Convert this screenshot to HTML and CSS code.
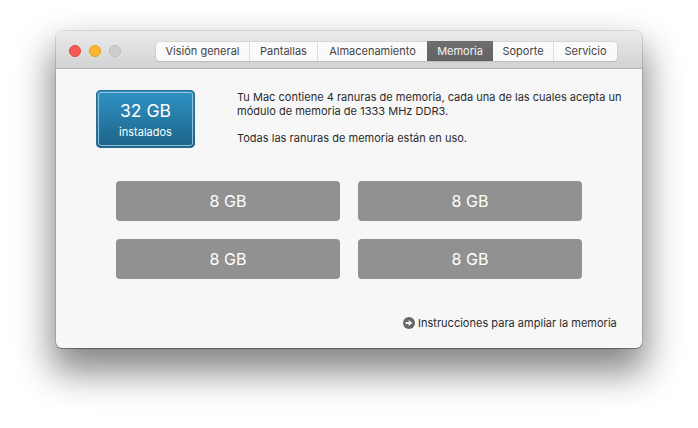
FILE: index.html
```html
<!DOCTYPE html>
<html lang="es">
<head>
<meta charset="utf-8">
<title>Memoria</title>
<link rel="stylesheet" href="styles.css">
</head>
<body>
<div class="window">
  <header class="titlebar">
    <div class="lights">
      <span class="light red"></span>
      <span class="light yellow"></span>
      <span class="light gray"></span>
    </div>
    <nav class="tabs">
      <span class="tab t1">Visión general</span>
      <span class="tab t2">Pantallas</span>
      <span class="tab t3">Almacenamiento</span>
      <span class="tab t4 active">Memoria</span>
      <span class="tab t5">Soporte</span>
      <span class="tab t6">Servicio</span>
    </nav>
  </header>
  <main class="content">
    <section class="summary">
      <div class="badge">
        <div class="badge-inner">
          <span class="badge-size">32 GB</span>
          <span class="badge-label">instalados</span>
        </div>
      </div>
      <div class="info">
        <p>Tu Mac contiene 4 ranuras de memoria, cada una de las cuales acepta un<br>módulo de memoria de 1333 MHz DDR3.</p>
        <p>Todas las ranuras de memoria están en uso.</p>
      </div>
    </section>
    <section class="slots">
      <div class="slot">8 GB</div>
      <div class="slot">8 GB</div>
      <div class="slot">8 GB</div>
      <div class="slot">8 GB</div>
    </section>
    <footer class="foot">
      <svg class="arrow" width="12" height="12" viewBox="0 0 12 12">
        <circle cx="6" cy="6" r="6" fill="#666"/>
        <path d="M2.6 5h3V2.9L9.5 6 5.6 9.1V7h-3z" fill="#f0f0f0"/>
      </svg>
      <span>Instrucciones para ampliar la memoria</span>
    </footer>
  </main>
</div>
</body>
</html>
```

FILE: styles.css
```css
html, body {
  margin: 0;
  padding: 0;
  width: 698px;
  height: 428px;
  overflow: hidden;
  background: #fff;
}
body {
  padding: 31px 56px 0;
  box-sizing: border-box;
  font-family: Inter, "Liberation Sans", sans-serif;
  color: #2b2b2b;
}
.window {
  width: 586px;
  height: 317px;
  border-radius: 6px;
  overflow: hidden;
  background: #f7f7f7;
  box-shadow: 0 0 0 0.5px rgba(0,0,0,.2), 0 1px 1px rgba(0,0,0,.3), 0 20px 36px 4px rgba(0,0,0,.48);
  display: flex;
  flex-direction: column;
}
.titlebar {
  height: 38px;
  box-sizing: border-box;
  flex: none;
  display: flex;
  align-items: flex-start;
  background: linear-gradient(#ebebeb, #d2d2d2);
  border-bottom: 1px solid #b4b4b4;
}
.lights {
  display: flex;
  gap: 8px;
  padding: 14px 0 0 13px;
  width: 87px;
  box-sizing: border-box;
  flex: none;
}
.light {
  width: 12px;
  height: 12px;
  border-radius: 50%;
  box-sizing: border-box;
}
.red { background: #f95a56; border: 1px solid #e14640; }
.yellow { background: #fcb62e; border: 1px solid #dd9d27; }
.gray { background: #cdcdcd; border: 1px solid #bcbcbc; }
.tabs {
  margin: 11px 0 0 13px;
  display: flex;
  height: 19px;
  border-radius: 4px;
  background: #fafafa;
  box-shadow: 0 0 0 .5px #c8c8c8, 0 1px 1px rgba(0,0,0,.18);
}
.tab {
  font-size: 11px;
  line-height: 19px;
  text-align: center;
  color: #444;
  box-sizing: border-box;
  border-right: 1px solid #dcdcdc;
}
.t1 { width: 94px; }
.t2 { width: 68px; }
.t3 { width: 109px; border-right: 0; }
.t4 { width: 66px; }
.t5 { width: 61px; }
.t6 { width: 63px; border-right: 0; }
.tab.active {
  background: linear-gradient(#6e6e6e, #636363);
  color: #f4f4f4;
  border-right: 0;
  margin-top: -1px;
  height: 20px;
  line-height: 21px;
}
.content {
  flex: 1;
  display: flex;
  flex-direction: column;
  padding: 21px 0 0;
}
.summary {
  display: flex;
  align-items: flex-start;
  padding-left: 40px;
}
.badge {
  width: 99px;
  height: 58px;
  box-sizing: border-box;
  padding: 2px;
  border-radius: 5px;
  background: linear-gradient(#3093c4, #1c6288);
  box-shadow: inset 0 0 0 1px #276a92;
  flex: none;
}
.badge-inner {
  height: 100%;
  box-sizing: border-box;
  border: 1px solid #8fc2da;
  border-radius: 3px;
  display: flex;
  flex-direction: column;
  align-items: center;
  color: #fff;
}
.badge-size {
  font-size: 17.5px;
  line-height: 22px;
  margin-top: 7px;
}
.badge-label {
  font-size: 11px;
  line-height: 14px;
  margin-top: 3px;
}
.info {
  margin-left: 42px;
  font-size: 11px;
  line-height: 14px;
  letter-spacing: .015px;
  color: #2b2b2b;
  white-space: nowrap;
}
.info p {
  margin: 0 0 13px;
}
.slots {
  display: grid;
  grid-template-columns: 224px 224px;
  grid-auto-rows: 40px;
  gap: 18px;
  margin: 23px 0 0 60px;
}
.slot {
  background: #919191;
  border-radius: 4px;
  color: #fff;
  font-size: 16px;
  line-height: 40px;
  text-align: center;
}
.foot {
  display: flex;
  align-items: center;
  gap: 3px;
  margin: 37px 0 0 347px;
  font-size: 11px;
  line-height: 14px;
  letter-spacing: .015px;
  color: #2b2b2b;
  white-space: nowrap;
}
.arrow {
  flex: none;
}
```
